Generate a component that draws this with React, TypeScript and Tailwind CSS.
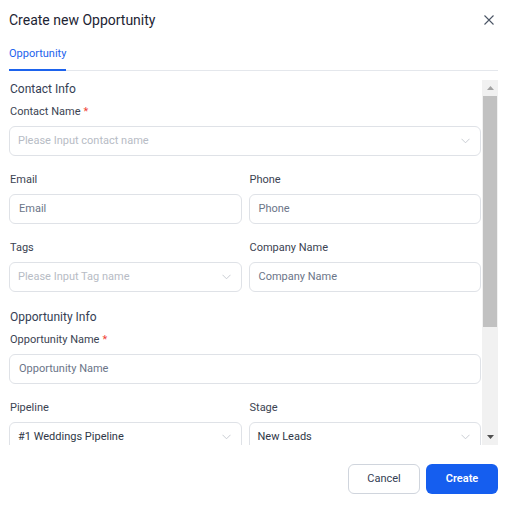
import type { ReactElement, ReactNode } from "react";

const font = { fontFamily: "Roboto, 'Noto Sans', Arial, sans-serif" };

function Chevron(): ReactElement {
  return (
    <svg width="9" height="6" viewBox="0 0 9 6" fill="none" className="shrink-0">
      <path d="M0.5 0.8 L4.5 4.8 L8.5 0.8" stroke="#c3c7ce" strokeWidth="0.9" />
    </svg>
  );
}

function Label({ text, required }: { text: string; required?: boolean }): ReactElement {
  return (
    <div className="h-4 leading-4 pl-[1px] text-[11px] text-[#3b4352] mb-[6px]">
      {text}
      {required && <span className="text-[#f04438] ml-[3px]">*</span>}
    </div>
  );
}

function TextField({ label, placeholder, required }: { label: string; placeholder: string; required?: boolean }): ReactElement {
  return (
    <div className="mb-4">
      <Label text={label} required={required} />
      <div className="h-[30px] rounded-[6px] border border-[#dfe2e7] px-[9px] flex items-center text-[11px] text-[#6b7588]">
        {placeholder}
      </div>
    </div>
  );
}

function SelectField({
  label,
  value,
  placeholder,
  required,
}: {
  label: string;
  value?: string;
  placeholder?: string;
  required?: boolean;
}): ReactElement {
  return (
    <div className="mb-4">
      <Label text={label} required={required} />
      <div className="h-[30px] rounded-[6px] border border-[#dfe2e7] pl-[8px] pr-[10px] flex items-center justify-between text-[11px]">
        {value ? (
          <span className="text-[#2f3747]">{value}</span>
        ) : (
          <span className="text-[#b7bcc5]">{placeholder}</span>
        )}
        <Chevron />
      </div>
    </div>
  );
}

function Section({ title, children }: { title: string; children: ReactNode }): ReactElement {
  return (
    <div>
      <div className="h-[18px] leading-[18px] pl-[1px] text-[12px] text-[#344054] mb-[6px]">{title}</div>
      {children}
    </div>
  );
}

// classic scrollbar: arrow buttons and a grey thumb
function ScrollBar(): ReactElement {
  return (
    <div className="w-[16px] h-full bg-[#f1f1f1] flex flex-col items-center">
      <div className="h-[16px] flex items-center justify-center">
        <svg width="7" height="4" viewBox="0 0 7 4">
          <path d="M0 4 L3.5 0 L7 4 Z" fill="#a3a3a3" />
        </svg>
      </div>
      <div className="w-[14px] h-[231px] bg-[#c1c1c1]" />
      <div className="flex-1" />
      <div className="h-[16px] flex items-center justify-center">
        <svg width="7" height="4" viewBox="0 0 7 4">
          <path d="M0 0 L3.5 4 L7 0 Z" fill="#505050" />
        </svg>
      </div>
    </div>
  );
}

export default function App(): ReactElement {
  return (
    <div className="w-[509px] h-[507px] bg-white pl-[9px] pr-[11px] flex flex-col" style={font}>
      <div className="h-[40px] flex items-center justify-between">
        <h2 className="text-[14px] text-[#1d2433]">Create new Opportunity</h2>
        <button className="mr-[4px] text-[#4b5565]">
          <svg width="10" height="10" viewBox="0 0 10 10" fill="none">
            <path d="M0.5 0.5 L9.5 9.5 M9.5 0.5 L0.5 9.5" stroke="currentColor" strokeWidth="1.1" />
          </svg>
        </button>
      </div>

      <div className="h-[31px] border-b border-[#e4e7ec] flex">
        <div className="h-[31px] -mb-px border-b-2 border-[#1d63ed] flex items-start pt-[6px] text-[11px] text-[#1d63ed] leading-4">
          Opportunity
        </div>
      </div>

      <div className="mt-[9px] h-[365px] flex">
        <div className="flex-1 overflow-hidden pr-[1px]">
          <Section title="Contact Info">
            <SelectField label="Contact Name" required placeholder="Please Input contact name" />
            <div className="grid grid-cols-2 gap-x-[7px]">
              <TextField label="Email" placeholder="Email" />
              <TextField label="Phone" placeholder="Phone" />
              <SelectField label="Tags" placeholder="Please Input Tag name" />
              <TextField label="Company Name" placeholder="Company Name" />
            </div>
          </Section>
          <Section title="Opportunity Info">
            <TextField label="Opportunity Name" required placeholder="Opportunity Name" />
            <div className="grid grid-cols-2 gap-x-[7px]">
              <SelectField label="Pipeline" value="#1 Weddings Pipeline" />
              <SelectField label="Stage" value="New Leads" />
            </div>
          </Section>
        </div>
        <ScrollBar />
      </div>

      <div className="mt-[19px] flex justify-end gap-[6px]">
        <button className="w-[72px] h-[30px] rounded-[6px] border border-[#d0d5dd] bg-white text-[11px] text-[#344054]">
          Cancel
        </button>
        <button className="w-[72px] h-[30px] rounded-[6px] bg-[#155eef] text-[11px] font-semibold text-white">
          Create
        </button>
      </div>
    </div>
  );
}
